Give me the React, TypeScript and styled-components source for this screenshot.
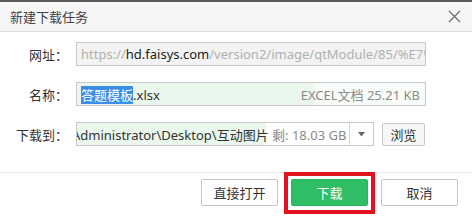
import React from "react";
import styled, { createGlobalStyle } from "styled-components";

const GlobalStyle = createGlobalStyle`
  html, body {
    margin: 0;
    padding: 0;
    background: #ffffff;
  }
  body {
    font-family: "Noto Sans", "Noto Sans CJK SC", sans-serif;
    font-size: 13px;
    color: #333;
  }
`;

const Dialog = styled.div`
  position: relative;
  width: 472px;
  height: 217px;
  box-sizing: border-box;
  border-top: 2px solid #5a5a5a;
  background: #fff;
  display: flex;
  flex-direction: column;
`;

const TitleBar = styled.div`
  height: 30px;
  box-sizing: border-box;
  background: #f6f6f6;
  border-bottom: 1px solid #dcdcdc;
  display: flex;
  align-items: center;
  justify-content: space-between;
  padding: 0 11px 0 10px;
`;

const Title = styled.div`
  font-size: 13px;
  color: #444;
`;

const CloseButton = styled.div`
  width: 14px;
  height: 14px;
  display: flex;
  align-items: center;
  justify-content: center;
`;

const Body = styled.div`
  padding-top: 10px;
  display: flex;
  flex-direction: column;
  gap: 16px;
  height: 140px;
  box-sizing: border-box;
`;

const Row = styled.div`
  display: flex;
  align-items: center;
  height: 24px;
`;

const Label = styled.div`
  width: 68px;
  text-align: right;
  margin-right: 8px;
  font-size: 13px;
  color: #333;
  white-space: nowrap;
`;

const Field = styled.div<{ $width: number; $bg?: string }>`
  position: relative;
  width: ${(p) => p.$width}px;
  height: 24px;
  box-sizing: border-box;
  border: 1px solid #c8c8c8;
  background: ${(p) => p.$bg || "#fff"};
  display: flex;
  align-items: center;
  overflow: hidden;
  white-space: nowrap;
  font-size: 13px;
`;

const Progress = styled.div`
  position: absolute;
  left: 0;
  top: 0;
  bottom: 0;
  background: #eaf7ec;
`;

const FieldText = styled.div<{ $shift?: number }>`
  position: relative;
  flex: 1;
  padding-left: 4px;
  margin-left: ${(p) => p.$shift || 0}px;
  overflow: hidden;
  color: #333;
`;

const Muted = styled.span`
  color: #b0b0b0;
`;

const Dark = styled.span`
  color: #222;
`;

const Free = styled.span`
  color: #8a8a8a;
`;

const Selected = styled.span`
  background: #3a8ee6;
  color: #fff;
`;

const Meta = styled.div`
  position: relative;
  color: #8a8a8a;
  padding-right: 5px;
  padding-left: 6px;
`;

const DropButton = styled.div`
  position: relative;
  width: 23px;
  height: 22px;
  border-left: 1px solid #d4d4d4;
  background: #fff;
  display: flex;
  align-items: center;
  justify-content: center;
`;

const SmallButton = styled.div`
  margin-left: 8px;
  width: 43px;
  height: 23px;
  box-sizing: border-box;
  border: 1px solid #c8c8c8;
  border-radius: 2px;
  background: #f7f7f7;
  display: flex;
  align-items: center;
  justify-content: center;
  font-size: 13px;
  color: #333;
`;

const Footer = styled.div`
  flex: 1;
  border-top: 1px solid #e6e6e6;
  display: flex;
  justify-content: flex-end;
  align-items: flex-start;
  padding: 6px 14px 0 0;
  gap: 13px;
`;

const Button = styled.div<{ $primary?: boolean }>`
  width: 77px;
  height: 27px;
  box-sizing: border-box;
  border: 1px solid ${(p) => (p.$primary ? "#27b35c" : "#c4c4c4")};
  border-radius: 2px;
  background: ${(p) => (p.$primary ? "#2fbe65" : "#fff")};
  color: ${(p) => (p.$primary ? "#fff" : "#333")};
  display: flex;
  align-items: center;
  justify-content: center;
  font-size: 13px;
`;

const Highlight = styled.div`
  position: absolute;
  left: 284px;
  top: 170px;
  width: 91px;
  height: 42px;
  box-sizing: border-box;
  border: 4px solid #e0141e;
  pointer-events: none;
`;

export default function App() {
  return (
    <>
      <GlobalStyle />
      <Dialog>
        <TitleBar>
          <Title>新建下载任务</Title>
          <CloseButton>
            <svg width="13" height="13" viewBox="0 0 13 13">
              <path d="M1 1L12 12M12 1L1 12" stroke="#6a6a6a" strokeWidth="1.2" fill="none" />
            </svg>
          </CloseButton>
        </TitleBar>
        <Body>
          <Row>
            <Label>网址：</Label>
            <Field $width={350} $bg="#f3f3f3">
              <FieldText>
                <Muted>https://</Muted>
                <Dark>hd.faisys.com</Dark>
                <Muted>/version2/image/qtModule/85/%E7%A4</Muted>
              </FieldText>
            </Field>
          </Row>
          <Row>
            <Label>名称：</Label>
            <Field $width={350} $bg="#f8fcf8">
              <Progress style={{ width: "68%" }} />
              <FieldText>
                <Selected>答题模板</Selected>
                .xlsx
              </FieldText>
              <Meta>EXCEL文档 25.21 KB</Meta>
            </Field>
          </Row>
          <Row>
            <Label>下载到：</Label>
            <Field $width={298}>
              <Progress style={{ width: "64%" }} />
              <FieldText $shift={-9}>
                Administrator\Desktop\互动图片 <Free>剩: 18.03 GB</Free>
              </FieldText>
              <DropButton>
                <svg width="7" height="5" viewBox="0 0 7 5">
                  <path d="M0 0H7L3.5 4.5Z" fill="#666" />
                </svg>
              </DropButton>
            </Field>
            <SmallButton>浏览</SmallButton>
          </Row>
        </Body>
        <Footer>
          <Button>直接打开</Button>
          <Button $primary>下载</Button>
          <Button>取消</Button>
        </Footer>
        <Highlight />
      </Dialog>
    </>
  );
}
